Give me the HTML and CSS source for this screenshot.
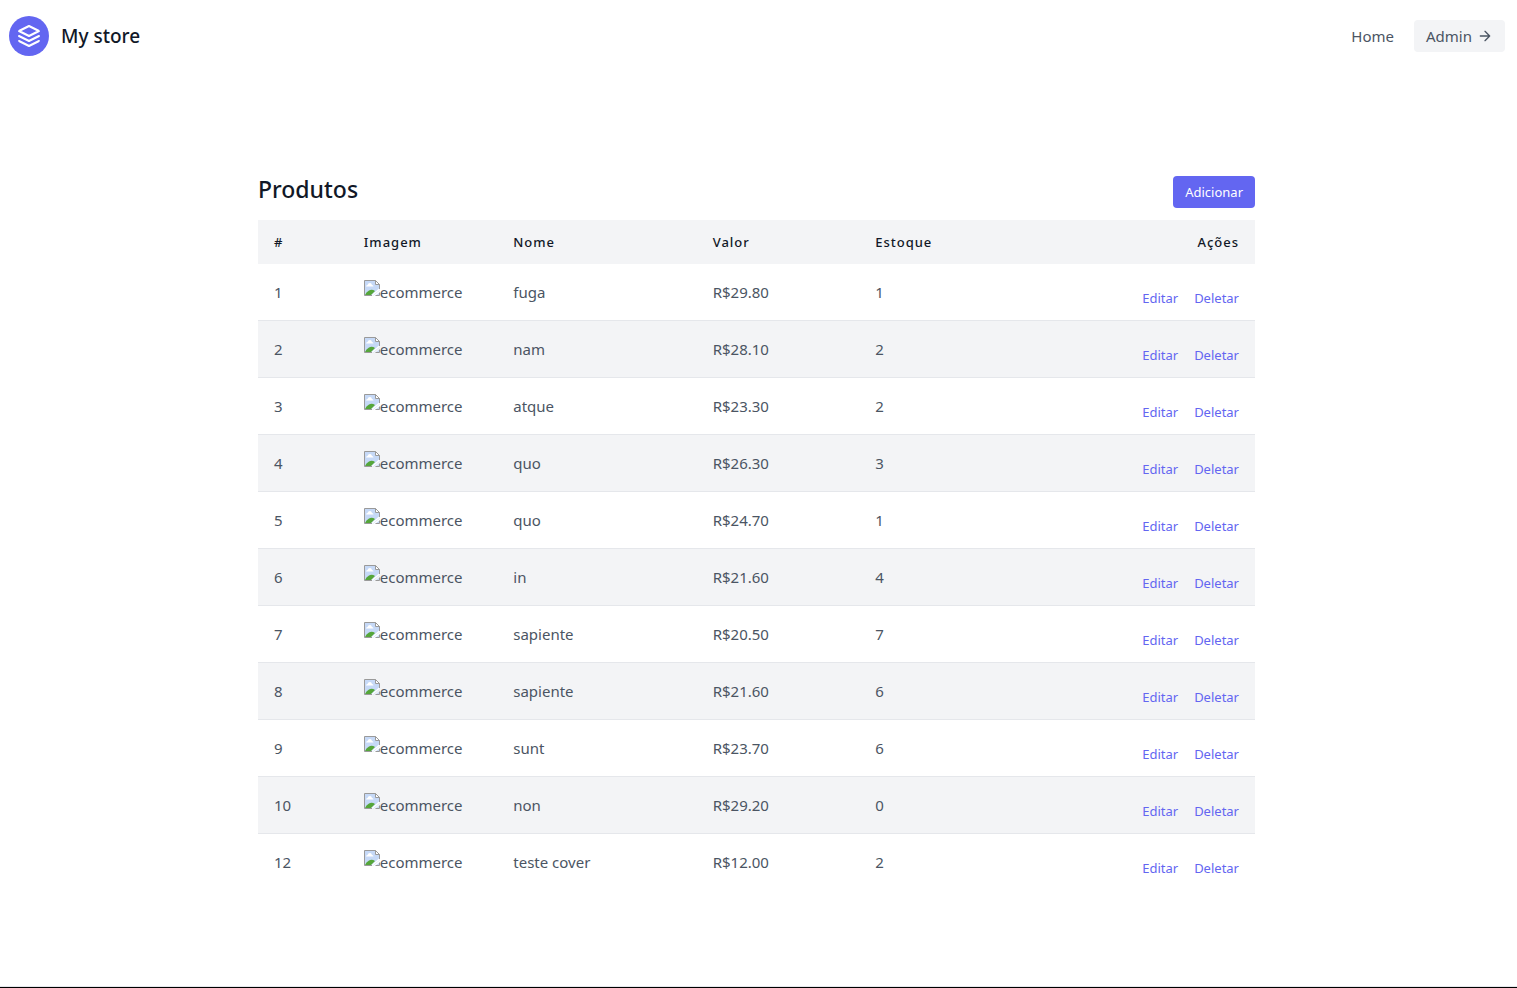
FILE: index.html
```html
<!DOCTYPE html>
<html lang="pt-BR">
<head>
<meta charset="utf-8">
<meta name="viewport" content="width=device-width, initial-scale=1">
<title>My store</title>
<link rel="stylesheet" href="styles.css">
</head>
<body>
<svg class="sprite" aria-hidden="true">
  <symbol id="broken" viewBox="0 0 16 16">
    <path d="M.5.5h11l4 4v6l-6 5h-9z" fill="#c6d9f7"/>
    <path d="M2 6.500q0-1.500 1.500-1.500Q4 3 6 3q1.500 0 2 2 1.500 0 1.500 1.500z" fill="#fff"/>
    <path d="M1 15q1-3 4-4.500 3-1.500 6 .5L7 15z" fill="#55a63a"/>
    <path d="M15.500 8v2L9 15.500H7z" fill="#fff"/>
    <path d="M11.500 15.500l4-3v3z" fill="#c6d9f7"/>
    <path d="M8 15.500H.5V.5h11l4 4V9M15.500 12.500v3h-4" fill="none" stroke="#9a9a9a"/>
    <path d="M11.500.5v4h4z" fill="#fff" stroke="#9a9a9a"/>
  </symbol>
</svg>
<header class="topbar">
  <a class="brand" href="#">
    <svg class="logo" viewBox="0 0 24 24" fill="none" stroke="currentColor" stroke-width="2" stroke-linecap="round" stroke-linejoin="round" aria-hidden="true"><path d="M12 2L2 7l10 5 10-5-10-5zM2 17l10 5 10-5M2 12l10 5 10-5"/></svg>
    <span>My store</span>
  </a>
  <nav class="nav">
    <a class="nav-link" href="#">Home</a>
    <button class="admin" type="button">Admin
      <svg class="arrow" viewBox="0 0 24 24" fill="none" stroke="currentColor" stroke-width="2" stroke-linecap="round" stroke-linejoin="round" aria-hidden="true"><path d="M5 12h14M12 5l7 7-7 7"/></svg>
    </button>
  </nav>
</header>
<main class="page">
  <section class="products">
    <div class="heading">
      <h1 class="title">Produtos</h1>
      <button class="add" type="button">Adicionar</button>
    </div>
    <table class="table">
      <colgroup><col class="col-id"><col class="col-image"><col class="col-name"><col class="col-price"><col class="col-stock"><col class="col-actions"></colgroup>
      <thead><tr><th>#</th><th>Imagem</th><th>Nome</th><th>Valor</th><th>Estoque</th><th class="right">Ações</th></tr></thead>
      <tbody id="rows"></tbody>
    </table>
  </section>
</main>
<footer class="footer"></footer>
<script src="app.js"></script>
</body>
</html>
```
FILE: app.js
```js
const products = [
  [1, "fuga", "29.80", 1], [2, "nam", "28.10", 2], [3, "atque", "23.30", 2],
  [4, "quo", "26.30", 3], [5, "quo", "24.70", 1], [6, "in", "21.60", 4],
  [7, "sapiente", "20.50", 7], [8, "sapiente", "21.60", 6], [9, "sunt", "23.70", 6],
  [10, "non", "29.20", 0], [12, "teste cover", "12.00", 2]
];
document.getElementById("rows").innerHTML = products.map(([id, name, price, stock]) => `
  <tr>
    <td>${id}</td>
    <td><span class="thumb"><svg class="thumb-icon" aria-hidden="true"><use href="#broken"/></svg>ecommerce</span></td>
    <td>${name}</td>
    <td>R$${price}</td>
    <td>${stock}</td>
    <td class="actions-cell"><div class="actions"><a href="#">Editar</a><a href="#">Deletar</a></div></td>
  </tr>`).join("");
```
FILE: styles.css
```css
* { box-sizing: border-box; margin: 0; }
body {
  min-height: 100vh;
  display: flex;
  flex-direction: column;
  background: #fff;
  color: #4b5563;
  font-family: "Segoe UI", "Noto Sans", sans-serif;
  font-size: 15px;
  line-height: 24px;
}
a { color: inherit; text-decoration: none; }
button { border: 0; border-radius: 4px; font: inherit; color: inherit; cursor: pointer; }
.sprite { display: none; }
.topbar {
  display: flex;
  align-items: center;
  justify-content: space-between;
  padding: 16px 12px 16px 8px;
}
.brand {
  display: flex;
  align-items: center;
  gap: 12px;
  padding-left: 1px;
  color: #111827;
  font-size: 19px;
  font-weight: 500;
  line-height: 28px;
}
.logo { width: 40px; height: 40px; padding: 8px; border-radius: 50%; background: #6366f1; color: #fff; }
.nav { display: flex; align-items: center; gap: 20px; }
.admin { display: flex; align-items: center; gap: 5px; padding: 4px 12px; background: #f3f4f6; }
.arrow { width: 16px; height: 16px; }
.page { flex: 1; padding: 96px 12px 80px 8px; }
.products { width: 66.6%; margin: 0 auto; }
.heading { display: flex; align-items: flex-end; justify-content: space-between; padding: 4px 0 12px; }
.title { align-self: flex-start; color: #111827; font-size: 23px; font-weight: 500; line-height: 34px; }
.add { padding: 4px 12px; background: #6366f1; color: #fff; font-size: 13px; }
.heading { min-height: 52px; }
.table { width: 100%; table-layout: fixed; border-collapse: separate; border-spacing: 0; }
.col-id { width: 9%; }
.col-image { width: 15%; }
.col-name { width: 20%; }
.col-price { width: 16.3%; }
.col-stock { width: 14%; }
th {
  padding: 12px 16px;
  background: #f3f4f6;
  color: #111827;
  font-size: 13px;
  font-weight: 500;
  line-height: 20px;
  letter-spacing: 1px;
  text-align: left;
}
.right { text-align: right; }
td { padding: 16px; border-bottom: 1px solid #e5e7eb; vertical-align: middle; }
tbody tr:nth-child(even) { background: #f3f4f6; }
tbody tr:last-child td { border-bottom: 0; }
.thumb { display: flex; }
.thumb-icon { width: 16px; height: 16px; }
.actions-cell { vertical-align: bottom; padding-bottom: 12px; }
.actions {
  display: flex;
  justify-content: flex-end;
  gap: 16px;
  color: #6366f1;
  font-size: 13px;
  line-height: 20px;
}
.footer { height: 2px; background: #000; border-top: 1px solid #e5e7eb; }
```
